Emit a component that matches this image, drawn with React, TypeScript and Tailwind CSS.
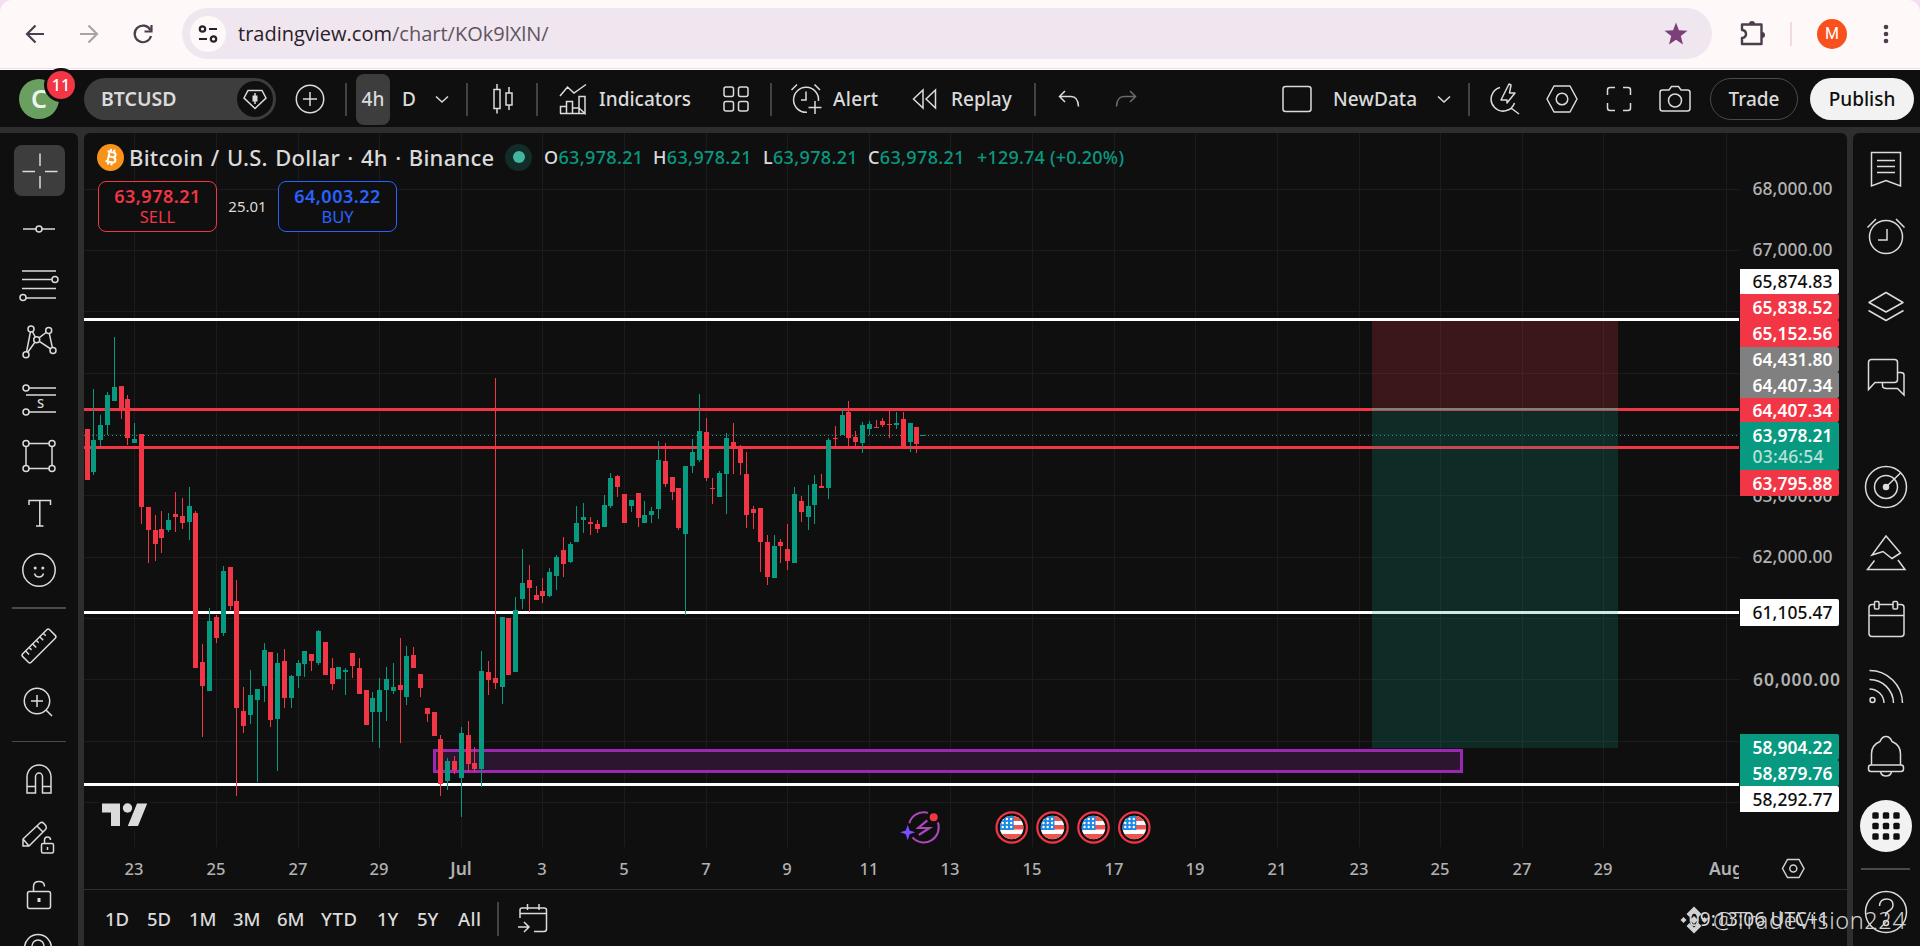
import React from 'react';

const UP = '#089981';
const DOWN = '#f23645';

// x, high, body top, body bottom, low, rising (1) or falling (0)
const candles: number[][] = [
  [87,429,429,480,480,0],[93,389,440,472,475,1],[100,415,425,440,446,1],[107,392,395,425,435,1],[114,337,387,401,401,1],
  [121,386,386,409,419,0],[127,395,399,438,445,0],[134,423,439,443,443,1],[141,434,434,507,524,0],[148,507,507,530,563,0],
  [155,515,530,544,561,0],[161,511,529,538,553,0],[168,513,520,530,532,1],[175,492,514,517,532,0],[182,498,516,523,529,0],
  [189,487,506,522,540,1],[195,511,513,668,668,0],[202,644,662,686,737,0],[209,608,621,691,691,1],[216,615,617,638,643,0],
  [223,566,571,633,636,1],[230,567,567,606,610,0],[236,580,601,708,796,0],[243,687,711,726,733,0],[250,670,695,715,724,1],
  [257,689,689,700,782,1],[264,643,650,686,702,1],[270,652,652,720,727,0],[277,653,663,719,771,1],[284,649,661,698,708,0],
  [291,675,676,698,708,1],[298,660,663,676,688,1],[304,651,651,664,677,1],[311,654,654,661,671,0],[318,630,631,663,665,1],
  [325,642,642,675,675,0],[332,658,668,684,690,0],[338,667,667,679,679,1],[345,668,670,672,695,1],[352,653,653,666,678,0],
  [359,658,668,694,694,0],[366,690,690,725,725,0],[372,692,698,712,742,1],[379,678,690,712,748,1],[386,667,679,690,721,1],
  [393,663,687,691,694,1],[400,638,685,690,743,0],[406,646,656,697,705,1],[413,647,655,668,668,0],[420,674,674,688,697,0],
  [427,708,708,714,722,0],[434,712,712,736,736,0],[440,735,739,784,796,0],[447,758,761,781,790,1],[454,756,761,770,774,0],
  [461,727,733,778,817,1],[468,721,735,764,772,0],[474,747,763,769,772,0],[481,651,671,769,787,1],[488,661,672,680,695,0],
  [495,378,678,683,689,0],[502,617,617,687,704,1],[508,618,618,675,675,0],[515,597,610,672,672,1],[522,549,583,599,609,1],
  [529,565,580,588,612,0],[536,586,595,600,600,0],[542,578,591,596,603,0],[549,568,572,596,597,1],[556,555,557,576,590,1],
  [563,537,550,564,577,0],[570,542,544,562,563,1],[576,506,523,542,542,1],[583,503,517,520,533,1],[590,517,522,524,535,0],
  [597,520,524,529,533,0],[604,495,505,527,527,1],[610,473,478,506,508,1],[617,475,476,487,497,0],[624,494,494,523,523,0],
  [631,500,500,506,512,1],[638,493,493,518,527,0],[644,501,515,523,523,1],[651,507,511,515,523,1],[658,441,460,509,519,1],
  [665,443,461,484,487,0],[672,477,477,492,500,0],[678,488,488,528,530,0],[685,466,466,534,615,1],[692,439,452,466,473,1],
  [699,394,431,460,462,1],[706,418,432,478,481,0],[712,478,488,489,504,0],[719,471,473,497,497,1],[726,433,438,474,514,1],
  [733,423,442,448,474,0],[740,445,447,463,475,0],[746,452,474,515,528,0],[753,506,509,513,529,0],[760,508,508,542,572,0],
  [767,535,542,577,585,0],[774,535,546,578,578,1],[780,539,542,546,563,0],[787,524,549,561,570,0],[794,487,494,563,563,1],
  [801,496,501,512,522,0],[808,485,506,517,530,1],[814,475,484,505,524,1],[821,474,486,488,488,0],[828,438,440,488,499,1],
  [835,426,438,439,447,0],[842,408,415,435,435,1],[848,401,412,438,447,0],[855,431,437,442,447,0],[862,422,425,443,453,1],
  [869,421,424,429,435,1],[876,420,427,428,428,0],[882,418,421,425,427,0],[889,410,424,425,438,0],[896,412,423,425,429,1],
  [903,412,419,447,447,0],[910,423,423,442,452,1],[916,427,427,444,453,0],
];

const gridY = [189, 250, 311, 373, 434, 495, 557, 618, 679, 741, 802];
const days: [number, string][] = [
  [134,'23'],[216,'25'],[298,'27'],[379,'29'],[461,'Jul'],[542,'3'],[624,'5'],[706,'7'],[787,'9'],[869,'11'],[950,'13'],
  [1032,'15'],[1114,'17'],[1195,'19'],[1277,'21'],[1359,'23'],[1440,'25'],[1522,'27'],[1603,'29'],[1726,'Aug'],
];
const scale: [number, string][] = [[188,'68,000.00'],[249,'67,000.00'],[495,'63,000.00'],[556,'62,000.00'],[741,'59,000.00']];
// top, height, price, fill, text colour, weight
const tags: [number, number, string, string, string, number][] = [
  [269,25,'65,874.83','#ffffff','#0f0f0f',500],
  [294,26,'65,838.52',DOWN,'#ffffff',600],
  [320,27,'65,152.56',DOWN,'#ffffff',600],
  [347,25,'64,431.80','#808080','#ffffff',600],
  [372,26,'64,407.34','#808080','#ffffff',600],
  [398,24,'64,407.34',DOWN,'#ffffff',600],
  [422,48,'63,978.21',UP,'#ffffff',600],
  [470,26,'63,795.88',DOWN,'#ffffff',600],
  [599,27,'61,105.47','#ffffff','#0f0f0f',500],
  [734,26,'58,904.22',UP,'#ffffff',600],
  [760,26,'58,879.76',UP,'#ffffff',600],
  [786,26,'58,292.77','#ffffff','#0f0f0f',500],
];

function Flag({ x }: { x: number }) {
  return (
    <g transform={`translate(${x} 827.5)`}>
      <circle r="15.200" fill="#0f0f0f" stroke={DOWN} strokeWidth="2.2" />
      <g clipPath="url(#flagClip)">
        <rect x="-12" y="-12" width="24" height="24" fill="#fff" />
        <rect x="-12" y="-12" width="24" height="5.500" fill="#ef5350" />
        <rect x="-12" y="-2.500" width="24" height="4.5" fill="#ef5350" />
        <rect x="-12" y="6.500" width="24" height="6" fill="#ef5350" />
        <rect x="-12" y="-12" width="14" height="14.5" fill="#1e88e5" />
        {[-8.5, -4.5, -0.5].map((sy) =>
          [-9, -4.800, -0.5].map((sx) => <circle key={`${sx}${sy}`} cx={sx} cy={sy} r="1.2" fill="#fff" />),
        )}
      </g>
    </g>
  );
}

function Chart() {
  return (
    <svg className="block h-[756px] w-[1763px]" viewBox="84 133 1763 756" fontFamily="'Noto Sans', sans-serif">
      <clipPath id="flagClip"><circle r="11.8" /></clipPath>
      <clipPath id="plot"><rect x="84" y="133" width="1655" height="756" /></clipPath>
      <g shapeRendering="crispEdges">
        {days.map(([x]) => <rect key={x} x={x} y="133" width="1" height="714" fill="#1c1c1c" />)}
        {gridY.map((y) => <rect key={y} x="84" y={y} width="1655" height="1" fill="#1c1c1c" />)}
        <rect x="434.5" y="750.5" width="1027" height="21" fill="#2c152f" stroke="#9c27b0" strokeWidth="3" />
        {[318, 611, 783].map((y) => <rect key={y} x="84" y={y} width="1655" height="3" fill="#fff" />)}
        {[408, 446].map((y) => <rect key={y} x="84" y={y} width="1655" height="3" fill={DOWN} />)}
        <line x1="84" x2="1739" y1="435.5" y2="435.5" stroke="#2a9482" strokeDasharray="1 3" />
        {candles.map(([x, h, t, b, l, up]) => (
          <g key={x} fill={up ? UP : DOWN}>
            <rect x={x} y={h} width="1" height={l - h} />
            <rect x={x - 2} y={t} width="5" height={b - t} />
          </g>
        ))}
        <rect x="920" y="435" width="6" height="1" fill={UP} />
        <rect x="1372" y="321" width="246" height="88" fill={DOWN} opacity="0.2" />
        <rect x="1372" y="410" width="246" height="338" fill={UP} opacity="0.2" />
        <rect x="1372" y="408" width="246" height="2" fill="#808080" />
      </g>
      <path d="M99 801h51v29h-51z" fill="#0f0f0f" />
      <path d="M102 803.5h18v22.5h-9v-13.500h-9zM137 803.500h10.200l-9.200 22.500h-10.200z" fill="#dbdbdb" />
      <circle cx="127.500" cy="808" r="4.700" fill="#dbdbdb" />

      <path d="M909.300 823.200A15 15 0 0 1 928 812.900M937.900 822.400A15 15 0 0 1 912.500 837.300" fill="none" stroke="#ab47bc" strokeWidth="2" />
      <path d="M927.300 820.300L918.300 828H929.500L918.800 835" fill="none" stroke="#ab47bc" strokeWidth="2.200" />
      <path d="M907.700 824.800l1.900 5.600 5.600 1.900-5.600 1.900-1.900 6-1.900-6-5.600-1.900 5.600-1.900z" fill="#7c4dff" />
      <circle cx="933.700" cy="817.200" r="4" fill={DOWN} />
      {[1011.700, 1052.500, 1093.500, 1134.300].map((x) => <Flag key={x} x={x} />)}

      <g fill="#b2b2b2" fontSize="17.4" fontWeight="500">
        {scale.map(([y, t]) => <text key={t} x="1752.500" y={y + 6.500} textLength="80">{t}</text>)}
        <text x="1753" y="685.500" fontWeight="600" textLength="87">60,000.00</text>
      </g>
      {tags.map(([y, h, t, bg, fg, w]) => (
        <g key={y}>
          <path d={`M1740 ${y}h97q2 0 2 2v${h - 4}q0 2-2 2h-97z`} fill={bg} />
          <text x="1752.500" y={h > 40 ? 441.5 : y + h / 2 + 6.5} fill={fg} fontSize="17.4" fontWeight={w} textLength="80">{t}</text>
        </g>
      ))}
      <text x="1752.500" y="462.500" fontSize="17.4" fill="#b9e0d9" fontWeight="500" textLength="71">03:46:54</text>

      <g fill="#b2b2b2" fontSize="16.500" fontWeight="500" textAnchor="middle" clipPath="url(#plot)">
        {days.map(([x, t]) => (
          <text key={x} x={x} y="875" fontWeight={t.length > 2 ? 600 : 500} fontSize={t.length > 2 ? 17.5 : 16.5}>{t}</text>
        ))}
      </g>
      <g fill="none" stroke="#d0d0d0" strokeWidth="1.500">
        <path d="M1787.500 859.500h11.500l5 9-5 9h-11.500l-5-9z" />
        <circle cx="1793.300" cy="868.500" r="3.500" />
      </g>
    </svg>
  );
}

// Line icon whose drawing is centred on 0,0
function Icon({ w, h, sw = 1.5, className = '', children }: { w: number; h: number; sw?: number; className?: string; children: React.ReactNode }) {
  return (
    <svg width={w} height={h} viewBox={`${-w / 2} ${-h / 2} ${w} ${h}`} fill="none" stroke="currentColor" strokeWidth={sw} className={`block shrink-0 ${className}`}>
      {children}
    </svg>
  );
}

function Dots({ pts }: { pts: number[][] }) {
  return <>{pts.map(([x, y]) => <circle key={`${x},${y}`} cx={x} cy={y} r="3" fill="#0f0f0f" />)}</>;
}

function Sep({ className }: { className: string }) {
  return <div className={`h-[33px] w-[2px] shrink-0 bg-[#434343] ${className}`} />;
}

function Browser() {
  return (
    <div className="bg-[#f3dfee]">
      <div className="flex h-[70px] items-start rounded-t-[12px] border-b border-white bg-[#fff8f8] pt-[8px] text-[#4d3c4b] shadow-[inset_0_-1px_0_#f0dbea]">
        <div className="flex h-[51px] items-center">
          <Icon w={20} h={22} sw={2.2} className="ml-[25px]"><path d="M9 0H-7.500M.5-8.500L-8 0L.5 8.500" /></Icon>
          <Icon w={20} h={22} sw={2.200} className="ml-[34px] text-[#a9a3a8]"><path d="M-9 0H7.500M-.5-8.500L8 0L-.5 8.500" /></Icon>
          <Icon w={22} h={22} sw={2.200} className="ml-[33px]"><path d="M7.300-4A8.300 8.300 0 1 0 8 2M8.500-9v6.500H1.500" /></Icon>
        </div>
        <div className="ml-[28px] flex h-[51px] w-[1530px] items-center rounded-full bg-[#f0e6ef] pl-[8px]">
          <div className="flex h-[36px] w-[36px] items-center justify-center rounded-full bg-[#fff8f8] text-[#2b2029]">
            <Icon w={22} h={22} sw={2.200}>
              <circle cx="-5.500" cy="-5" r="2.700" /><path d="M1-5h8M-9 5h8" /><circle cx="5.500" cy="5" r="2.700" />
            </Icon>
          </div>
          <div className="ml-[12px] w-[1200px] whitespace-nowrap font-['Open_Sans',sans-serif] text-[20px] text-[#2a2029]">
            tradingview.com<span className="text-[#5f5560]">/chart/KOk9lXlN/</span>
          </div>
          <Icon w={26} h={26} sw={0} className="ml-auto mr-[23px]">
            <path fill="#7d3f78" d="M0-11.500L2.900-3.700L11.500-3.300L4.800 1.900L7 10.500L0 5.700L-7 10.500L-4.800 1.900L-11.500-3.300L-2.900-3.700z" />
          </Icon>
        </div>
        <div className="flex h-[51px] items-center">
          <Icon w={28} h={28} sw={2.400} className="ml-[26px]">
            <path d="M-10-9.500H9.500V10H-10V4q4-.5 4-4t-4-4z" strokeLinejoin="round" />
            <path d="M-3-10a3 3 0 0 1 6 0zM10-2a3 3 0 0 1 0 6z" fill="currentColor" stroke="none" />
          </Icon>
          <div className="ml-[24px] h-[24px] w-[2px] bg-[#f5d9e2]" />
          <div className="ml-[25px] flex h-[30px] w-[30px] items-center justify-center rounded-full bg-[#f9511d] font-['Roboto',sans-serif] text-[16px] text-white">M</div>
          <Icon w={8} h={24} sw={0} className="ml-[35px]">
            <g fill="currentColor"><circle cy="-7" r="2.300" /><circle r="2.300" /><circle cy="7" r="2.300" /></g>
          </Icon>
        </div>
      </div>
    </div>
  );
}

function Header() {
  return (
    <div className="flex h-[57px] items-center bg-[#0f0f0f] pb-0 pt-[1px] text-[19px] font-medium text-[#dbdbdb]">
      <div className="relative ml-[19px] flex h-[40px] w-[40px] shrink-0 items-center justify-center rounded-full bg-[#6a9f5f] text-[25px] font-semibold text-[#eef5ec]">
        C
        <div className="absolute -right-[16px] -top-[8px] flex h-[28px] w-[28px] items-center justify-center rounded-full bg-[#f23645] text-[16px] font-medium text-white ring-[3px] ring-[#0f0f0f]">11</div>
      </div>
      <div className="ml-[25px] flex h-[42px] w-[192px] shrink-0 items-center rounded-full bg-[#3d3d3d] pl-[17px]">
        <span className="w-[136px] text-[19.500px] font-semibold">BTCUSD</span>
        <div className="flex h-[36px] w-[36px] items-center justify-center rounded-full bg-[#0f0f0f]">
          <Icon w={26} h={24}>
            <path d="M-7-8.500H7L11-1L0 9.500L-11-1z" /><path d="M0-6v11" /><rect x="-2.500" y="-3.500" width="5" height="6" fill="currentColor" stroke="none" />
          </Icon>
        </div>
      </div>
      <Icon w={30} h={30} className="ml-[19px]"><circle r="13.700" /><path d="M-7 0H7M0-7V7" /></Icon>
      <Sep className="ml-[20px]" />
      <div className="ml-[9px] flex h-[51px] w-[34px] shrink-0 items-center justify-center rounded-[8px] bg-[#3d3d3d]">4h</div>
      <div className="ml-[12px] w-[16px]">D</div>
      <Icon w={14} h={10} className="ml-[17px]"><path d="M-6-2.500L0 3L6-2.500" /></Icon>
      <Sep className="ml-[17px]" />
      <Icon w={24} h={32} className="ml-[24px]">
        <rect x="-10" y="-9.500" width="6" height="19" /><path d="M-7-15v5.500M-7 9.500v5M5-12v6M5 6v5" /><rect x="2" y="-6" width="6" height="12" />
      </Icon>
      <Sep className="ml-[20px]" />
      <Icon w={28} h={32} className="ml-[21px]">
        <path d="M-13-3L-5.500-12L1-6L13-14.500M-12.500 14.500V7.500H-6.500V14.500M-6.500 8V2.500H-.5V14.500M-.5 9H6V14.500M6 9V-2.500H12V14.500zM-13 14.500H12.500" />
      </Icon>
      <div className="ml-[12px] w-[93px]">Indicators</div>
      <Icon w={26} h={26} className="ml-[31px]">
        <rect x="-12" y="-12" width="9.500" height="9.500" rx="2" /><rect x="2.500" y="-12" width="9.500" height="9.500" rx="2" />
        <rect x="-12" y="2.500" width="9.500" height="9.500" rx="2" /><rect x="2.500" y="2.500" width="9.500" height="9.500" rx="2" />
      </Icon>
      <Sep className="ml-[21px]" />
      <Icon w={32} h={34} className="ml-[18px]">
        <path d="M1 13.300A12.500 12.500 0 1 1 12.500 2M-14.500-9L-9-14.500M14-9L8.500-14.500M-5 1H0V-7.500M2.500 8.500H15.500M9 2V15" />
      </Icon>
      <div className="ml-[11px] w-[47px] tracking-[0.300px]">Alert</div>
      <Icon w={26} h={22} className="ml-[32px]"><path d="M-2-9V9L-11.500 0zM10.500-9V9L1 0z" /></Icon>
      <div className="ml-[13px] w-[63px]">Replay</div>
      <Sep className="ml-[20px]" />
      <Icon w={22} h={20} className="ml-[22px]"><path d="M-4-8L-9.500-2.500L-4 3M-9.500-2.500H2Q9-2.500 9.500 7.500" /></Icon>
      <Icon w={22} h={20} className="ml-[35px] text-[#6b6b6b]"><path d="M4-8L9.500-2.500L4 3M9.500-2.500H-2Q-9-2.500-9.500 7.500" /></Icon>
      <Icon w={30} h={28} className="ml-[145px]"><rect x="-14" y="-12.500" width="28" height="25" rx="2.500" /></Icon>
      <div className="ml-[21px] w-[86px] tracking-[0.100px]">NewData</div>
      <Icon w={14} h={10} className="ml-[18px]"><path d="M-6-2.500L0 3L6-2.500" /></Icon>
      <Sep className="ml-[17px]" />
      <Icon w={30} h={34} className="ml-[20px]">
        <path d="M-5-11.500A12 12 0 1 0 9.500 4M6 9L14 15M4-15L-4 1H2V4L10-6H4.500L6-14z" strokeLinejoin="round" />
      </Icon>
      <Icon w={34} h={30} className="ml-[25px]"><path d="M-8-13H8L15 0L8 13H-8L-15 0z" strokeLinejoin="round" /><circle r="5.800" /></Icon>
      <Icon w={26} h={26} className="ml-[27px]"><path d="M-11.500-4V-9Q-11.500-11.500-9-11.500H-4M4-11.500H9Q11.500-11.500 11.500-9V-4M11.500 4V9Q11.500 11.500 9 11.500H4M-4 11.500H-9Q-11.500 11.500-11.500 9V4" /></Icon>
      <Icon w={34} h={28} className="ml-[26px]">
        <path d="M-12.500-9H-6L-3.500-12.500H3.500L6-9H12.500Q15-9 15-6.500V9.500Q15 12 12.500 12H-12.500Q-15 12-15 9.500V-6.500Q-15-9-12.500-9z" /><circle cy="1.500" r="6.500" />
      </Icon>
      <div className="ml-[18px] flex h-[42px] w-[88px] shrink-0 items-center justify-center rounded-full border border-[#4a4a4a]">Trade</div>
      <div className="ml-[12px] flex h-[42px] w-[104px] shrink-0 items-center justify-center rounded-full bg-[#f2f2f2] text-[#0f0f0f]">Publish</div>
    </div>
  );
}

function Tools() {
  const c = 'self-center';
  return (
    <div className="flex h-[813px] w-[78px] shrink-0 flex-col overflow-hidden rounded-tr-[6px] bg-[#0f0f0f] pt-[12px] text-[#dbdbdb]">
      <div className="ml-[14px] flex h-[51px] w-[51px] shrink-0 items-center justify-center rounded-[8px] bg-[#3d3d3d]">
        <Icon w={40} h={40}><path d="M-17.500.500H-5M5 .500H17.500M0-17.500V-5M0 5V17.500" /></Icon>
      </div>
      <Icon w={44} h={44} className={`mt-[11px] ${c}`}><path d="M-16 0H-3M3 0H16" /><circle r="3" /></Icon>
      <Icon w={44} h={44} className={`mt-[11px] ${c}`}>
        <path d="M-17-13H17M-17-4.500H16M-17 4.500H17M-16 14H17" /><Dots pts={[[16, -4.500], [-16, 13.500]]} />
      </Icon>
      <Icon w={44} h={44} className={`mt-[14px] ${c}`}>
        <path d="M-13 12.700L-8-13L-2.300-2.300L-13 12.700M-2.300-2.300L9.700-11.500L14 8.500L-2.300-2.300" />
        <Dots pts={[[-8, -13], [9.700, -11.500], [-2.300, -2.300], [-13, 12.700], [14, 8.500]]} />
      </Icon>
      <Icon w={44} h={44} className={`mt-[14px] ${c}`}>
        <path d="M-13-12H17M-13-5H17M-13 12H17" /><Dots pts={[[-13, -12], [-13, 12]]} />
        <text x="1.500" y="8" textAnchor="middle" fontSize="13" fontWeight="500" fill="currentColor" stroke="none">S</text>
      </Icon>
      <Icon w={44} h={44} className={`mt-[12px] ${c}`}>
        <rect x="-13" y="-12.500" width="26" height="25" /><Dots pts={[[-13, -12.500], [13, -12.500], [-13, 12.500], [13, 12.500]]} />
      </Icon>
      <Icon w={44} h={44} className={`mt-[13px] ${c}`}><path d="M-10-8V-12.500H11.500V-8M.8-12.500V13M-3 13H4.500" /></Icon>
      <Icon w={44} h={44} className={`mt-[13px] ${c}`}>
        <circle r="16.200" /><path d="M-4.500 3.500q1 3.500 4.500 3.500t4.500-3.500" />
        <g fill="currentColor" stroke="none"><circle cx="-3.800" cy="-2" r="1.500" /><circle cx="3.800" cy="-2" r="1.500" /></g>
      </Icon>
      <div className="ml-[12px] mt-[15px] h-[2px] w-[54px] shrink-0 bg-[#4a4a4a]" />
      <Icon w={44} h={44} className={`mt-[15px] ${c}`}>
        <g transform="rotate(-45)"><rect x="-19" y="-6" width="38" height="12" rx="2" /><path d="M-13-6v5M-8-6v3.500M-3-6v5M2-6v3.500M7-6v5M12-6v3.500" /></g>
      </Icon>
      <Icon w={44} h={44} className={`mt-[11px] ${c}`}><circle cx="-2" cy="0" r="12.700" /><path d="M-8 0H4M-2-6V6M7 9L13 15" /></Icon>
      <div className="ml-[12px] mt-[18px] h-[1px] w-[54px] shrink-0 bg-[#4a4a4a]" />
      <Icon w={44} h={44} className={`mt-[15px] ${c}`}>
        <path d="M-12 14V-2A12 12 0 0 1 12-2V14H3.500V-2A3.500 4 0 0 0-3.500-2V14zM-12 7.500H-3.500M3.500 7.500H12" />
      </Icon>
      <Icon w={44} h={44} className={`mt-[14px] ${c}`}>
        <path d="M-16 2L1-14Q3-15.500 5-13.500L7-11Q8-9 6.500-7.500L-10 9H-16zM-16 2L-10 9M-2-11L4-5" />
        <rect x="2.500" y="6.500" width="12" height="9.500" rx="1.500" fill="#0f0f0f" /><path d="M5.500 6V3q0-3 3-3t3 3M8.500 10v3" />
      </Icon>
      <Icon w={44} h={44} className={`mt-[14px] ${c}`}>
        <rect x="-11.500" y="-3.500" width="23" height="17" rx="2" /><path d="M-5.500-4V-8.500q0-5 5.500-5t5.500 5" /><path d="M0 3v4" strokeWidth="3" />
      </Icon>
      <Icon w={44} h={44} className={`mt-[16px] ${c}`}><circle cx="-1" cy="-7" r="13.500" /><circle cx="-1" cy="-9" r="6" /></Icon>
    </div>
  );
}

function Widgets() {
  return (
    <div className="flex h-[813px] w-[67px] shrink-0 flex-col items-center overflow-hidden rounded-tl-[6px] bg-[#0f0f0f] pr-[2px] pt-[12px] text-[#dbdbdb]">
      <Icon w={48} h={48}><path d="M-14.500-16.500H14.500V17L0 11.500L-14.500 17zM-9-8.500H9M-9-2.500H9M-9 3.500H9" /></Icon>
      <Icon w={48} h={48} className="mt-[20px]"><circle r="16.500" /><path d="M-18.500-9.500L-10-18M18.500-9.500L10-18M-8 3H1V-8" /></Icon>
      <Icon w={48} h={48} className="mt-[22px]"><path d="M0-14.500L17-4.500L0 5L-17-4.500zM-17.500 3.500L0 13.500L17.500 3.500" strokeLinejoin="round" /></Icon>
      <Icon w={48} h={48} className="mt-[22px]">
        <path d="M-17.500 12.500V-14.500Q-17.500-17.500-14.500-17.500H8.500Q11.500-17.500 11.500-14.500V2.500Q11.500 5.500 8.500 5.500H-11zM11.500-4.500H14.500Q18-4.500 18-2V18L11.500 11.500H.5Q-3.500 11.500-3.500 8.500V5.500" />
      </Icon>
      <Icon w={48} h={48} className="mt-[62px]"><circle r="20.500" /><circle r="11.500" /><circle r="2.500" fill="currentColor" /><path d="M0 0L15-14.500" /></Icon>
      <Icon w={48} h={48} className="mt-[18px]"><path d="M0-17L14.500 0L6 5.500L-3-1.500L-14 2zM-11.500 7.500L-18.500 16.500H19L12 7" /></Icon>
      <Icon w={48} h={48} className="mt-[18px]">
        <rect x="-17" y="-14.500" width="35" height="32" rx="3" /><path d="M-17-3.500H18" />
        <rect x="-11.500" y="-17.500" width="4.500" height="7.500" rx="1" fill="#0f0f0f" /><rect x="7" y="-17.500" width="4.500" height="7.500" rx="1" fill="#0f0f0f" />
      </Icon>
      <Icon w={48} h={48} className="mt-[20px]">
        <circle cx="-13.500" cy="13" r="2.500" /><path d="M-16.500-16.500A33 33 0 0 1 16.500 16M-16.500-7.500A24 24 0 0 1 7.500 16M-16.500 2A14.500 14.500 0 0 1-2 16" />
      </Icon>
      <Icon w={48} h={48} className="mt-[21px]">
        <path d="M-14.500 9V-2Q-14.500-11-6-14.500Q-4-19.500 0-19.500T6-14.500Q14.500-11 14.500-2V9" /><rect x="-17.500" y="9" width="35" height="6.500" rx="2.500" /><path d="M-5.500 16q1 4 5.500 4t5.500-4" />
      </Icon>
      <div className="mt-[20px] flex h-[52px] w-[52px] shrink-0 items-center justify-center rounded-full bg-[#f2f2f2] text-[#0f0f0f]">
        <Icon w={30} h={30} sw={0}>
          {[-10.500, 0, 10.500].map((y) => [-10.500, 0, 10.500].map((x) => <rect key={`${x}${y}`} x={x - 3.200} y={y - 3.200} width="6.400" height="6.400" rx="1.500" fill="currentColor" />))}
        </Icon>
      </div>
      <div className="mt-[16px] h-[2px] w-[49px] shrink-0 bg-[#4a4a4a]" />
      <Icon w={48} h={48} className="mt-[18px]"><circle r="20.500" /><path d="M-6.500-6q.500-7 7-7t6.500 6q0 4-5 6.500-2.500 1.500-2.500 5" /><circle cx="0" cy="11" r="2.500" /></Icon>
    </div>
  );
}

function Legend() {
  return (
    <div className="absolute left-[13px] top-[8px] whitespace-nowrap text-[#dbdbdb]">
      <div className="flex h-[32px] items-center">
        <div className="flex h-[27px] w-[27px] items-center justify-center rounded-full bg-[#f7931a]">
          <Icon w={20} h={20} sw={2}><g transform="rotate(12)"><path d="M-4.500-5H1.500Q4-5 4-2.700T1.500-.2H-2.500M1.500-.2Q5-.2 5 2.500T1.500 5H-4.500M-2.500-5V5M-1.500-8V-5M2-8V-5M-1.500 5V8M2 5V8" stroke="#fff" /></g></Icon>
        </div>
        <div className="ml-[5px] w-[367px] text-[22px] font-medium tracking-[0.250px] [word-spacing:1.400px]">Bitcoin / U.S. Dollar · 4h · Binance</div>
        <div className="ml-[9px] flex h-[27px] w-[27px] items-center justify-center rounded-full bg-[#122d29]"><div className="h-[12px] w-[12px] rounded-full bg-[#42b5a0]" /></div>
        <div className="ml-[12px] flex text-[18px] font-medium tracking-[0.350px] text-[#089981]">
          <div className="w-[109px]"><span className="text-[#dbdbdb]">O</span>63,978.21</div>
          <div className="w-[110px]"><span className="text-[#dbdbdb]">H</span>63,978.21</div>
          <div className="w-[105px]"><span className="text-[#dbdbdb]">L</span>63,978.21</div>
          <div className="w-[109px]"><span className="text-[#dbdbdb]">C</span>63,978.21</div>
          <div className="tracking-[0.200px]">+129.74 (+0.20%)</div>
        </div>
      </div>
      <div className="ml-[1px] mt-[8px] flex items-center">
        <div className="flex h-[51px] w-[119px] flex-col items-center justify-center rounded-[8px] border border-[#f23645] bg-[#0f0f0f] pb-[2px] text-[#f23645]">
          <span className="text-[18px] font-semibold leading-[22px] tracking-[0.500px]">63,978.21</span><span className="text-[16.500px] leading-[19px]">SELL</span>
        </div>
        <div className="w-[61px] text-center text-[15px]">25.01</div>
        <div className="flex h-[51px] w-[119px] flex-col items-center justify-center rounded-[8px] border border-[#2962ff] bg-[#0f0f0f] pb-[2px] text-[#2962ff]">
          <span className="text-[18px] font-semibold leading-[22px] tracking-[0.500px]">64,003.22</span><span className="text-[16.500px] leading-[19px]">BUY</span>
        </div>
      </div>
    </div>
  );
}

function Footer() {
  return (
    <div className="relative flex h-[57px] items-center whitespace-nowrap border-t border-[#2e2e2e] pt-[2px] text-[18.500px] font-medium text-[#dbdbdb]">
      <div className="ml-[21px] w-[42px]">1D</div>
      <div className="w-[42px]">5D</div>
      <div className="w-[44px]">1M</div>
      <div className="w-[44px]">3M</div>
      <div className="w-[44px]">6M</div>
      <div className="w-[56px] tracking-[0.700px]">YTD</div>
      <div className="w-[40px]">1Y</div>
      <div className="w-[41px]">5Y</div>
      <div className="w-[39px] tracking-[0.500px]">All</div>
      <div className="h-[34px] w-[2px] bg-[#434343]" />
      <Icon w={32} h={34} className="ml-[18px]">
        <path d="M-13-1V-9Q-13-11-11-11H11Q13.500-11 13.500-9V10Q13.500 12.500 11 12.500H1M-13-5.500H13.500M-5.500-15V-9M6-15V-9M-15 8H-4M-9 3L-4 8L-9 13" />
      </Icon>
      <div className="ml-auto mr-[18px] text-[19px] font-normal tracking-[0.150px]">09:13:06 UTC+1</div>
      <div className="absolute left-[1596px] top-[14px] flex items-center text-[#d2d2d2]">
        <Icon w={28} h={28} sw={0}>
          <g fill="currentColor"><path d="M0-13.500L7.500-6L4.500-3L0-7.500L-4.500-3L-7.500-6zM0 13.500L7.500 6L4.500 3L0 7.500L-4.500 3L-7.500 6zM-10.500-3L-7.500 0L-10.500 3L-13.500 0zM10.500-3L13.500 0L10.500 3L7.500 0zM0-4L4 0L0 4L-4 0z" /></g>
        </Icon>
        <span className="ml-[5px] text-[23.500px] font-light leading-[32px] tracking-[0.600px]">@TradeVision224</span>
      </div>
    </div>
  );
}

export default function App() {
  return (
    <div className="h-[946px] w-[1920px] overflow-hidden bg-[#2e2e2e] font-['Noto_Sans',sans-serif]">
      <Browser />
      <Header />
      <div className="flex gap-[6px] pt-[6px]">
        <Tools />
        <div className="relative z-10 h-[813px] w-[1763px] shrink-0 rounded-t-[6px] bg-[#0f0f0f]">
          <Chart />
          <Legend />
          <Footer />
        </div>
        <Widgets />
      </div>
    </div>
  );
}
